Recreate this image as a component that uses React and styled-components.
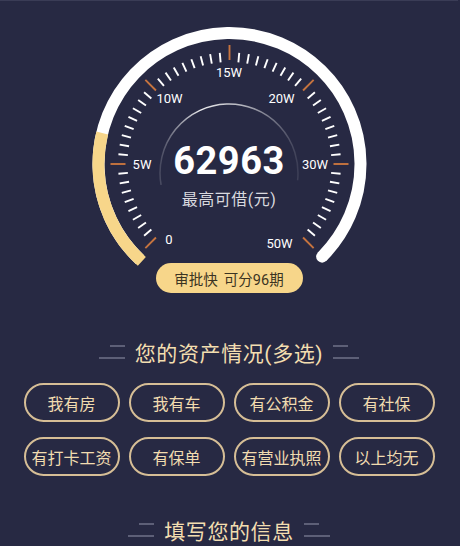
import React from 'react';
import styled, { createGlobalStyle } from 'styled-components';

const GlobalStyle = createGlobalStyle`
  html, body {
    margin: 0;
    padding: 0;
    background: #272943;
  }
  body {
    font-family: Roboto, "Noto Sans CJK SC", sans-serif;
  }
`;

const Page = styled.div`
  width: 458px;
  min-height: 546px;
  border-top: 1px solid #3a3c56;
  box-sizing: border-box;
  overflow: hidden;
`;

const GaugeWrap = styled.div`
  position: relative;
  height: 262px;
`;

const GaugeSvg = styled.svg`
  display: block;
  overflow: visible;
`;

const CenterText = styled.div`
  position: absolute;
  left: 0;
  right: 0;
  top: 137px;
  text-align: center;
`;

const Amount = styled.div`
  font-family: Roboto, sans-serif;
  font-weight: 700;
  font-size: 38px;
  line-height: 46px;
  color: #ffffff;
  letter-spacing: 0.5px;
`;

const Caption = styled.div`
  margin-top: 5px;
  font-size: 16px;
  line-height: 22px;
  color: #d9d9df;
  letter-spacing: 0.5px;
`;

const Badge = styled.div`
  width: 147px;
  height: 30px;
  margin: 0 auto;
  border-radius: 15px;
  background: #f7d68a;
  color: #3b3422;
  font-size: 14.5px;
  display: flex;
  align-items: center;
  justify-content: center;
  gap: 6px;
`;

const Title = styled.div`
  display: flex;
  align-items: center;
  justify-content: center;
  gap: 10px;
  margin-top: ${p => p.$top}px;
  height: 30px;
  font-size: 21px;
  letter-spacing: 0.6px;
  color: #f3deb0;
`;

const Deco = styled.span`
  display: flex;
  flex-direction: column;
  align-items: ${p => (p.$side === 'left' ? 'flex-end' : 'flex-start')};
  gap: 10px;

  &::before,
  &::after {
    content: '';
    display: block;
    height: 2px;
    background: #5d5f77;
  }
  &::before {
    width: 15px;
  }
  &::after {
    width: 26px;
  }
`;

const ChipGrid = styled.div`
  display: grid;
  grid-template-columns: repeat(4, 96px);
  column-gap: 9px;
  row-gap: 15px;
  justify-content: center;
  margin-top: 16px;
`;

const Chip = styled.div`
  box-sizing: border-box;
  height: 39px;
  border: 2px solid #d6be96;
  border-radius: 20px;
  display: flex;
  align-items: center;
  justify-content: center;
  font-size: 16px;
  color: #f1dcb0;
  white-space: nowrap;
`;

const CX = 229.5;
const CY = 163;

const pt = (deg, r, cx = CX, cy = CY) => {
  const a = (deg * Math.PI) / 180;
  return [cx + r * Math.sin(a), cy - r * Math.cos(a)];
};

const arc = (from, to, r, cx = CX, cy = CY) => {
  const [x1, y1] = pt(from, r, cx, cy);
  const [x2, y2] = pt(to, r, cx, cy);
  const large = to - from > 180 ? 1 : 0;
  return `M ${x1} ${y1} A ${r} ${r} 0 ${large} 1 ${x2} ${y2}`;
};

const labels = [
  { t: '0', x: 169, y: 238 },
  { t: '5W', x: 142, y: 163 },
  { t: '10W', x: 169.5, y: 97.5 },
  { t: '15W', x: 229, y: 71.5 },
  { t: '20W', x: 281.5, y: 97.5 },
  { t: '30W', x: 315, y: 163 },
  { t: '50W', x: 279.5, y: 242.5 },
];

const assets = ['我有房', '我有车', '有公积金', '有社保', '有打卡工资', '有保单', '有营业执照', '以上均无'];

const Gauge = () => {
  const ticks = [];
  for (let i = 0; i <= 54; i++) {
    const deg = -135 + i * 5;
    const major = i % 9 === 0;
    const [x1, y1] = pt(deg, major ? 104 : 102);
    const [x2, y2] = pt(deg, major ? 119 : 111.5);
    ticks.push(
      <line
        key={i}
        x1={x1}
        y1={y1}
        x2={x2}
        y2={y2}
        stroke={major ? '#c7743f' : '#ffffff'}
        strokeWidth="1.9"
      />
    );
  }
  const [ex, ey] = pt(135, 131);

  return (
    <GaugeSvg width="460" height="262" viewBox="0 0 460 262">
      <defs>
        <linearGradient id="inner" x1="0" y1="0" x2="1" y2="0">
          <stop offset="0" stopColor="#ffffff" stopOpacity="0.15" />
          <stop offset="0.3" stopColor="#ffffff" stopOpacity="0.9" />
          <stop offset="0.6" stopColor="#ffffff" stopOpacity="0.65" />
          <stop offset="1" stopColor="#ffffff" stopOpacity="0.1" />
        </linearGradient>
      </defs>
      <path d={arc(-137, 135, 131)} fill="none" stroke="#ffffff" strokeWidth="12" />
      <circle cx={ex} cy={ey} r="6" fill="#ffffff" />
      <path d={arc(-138, -76.3, 131)} fill="none" stroke="#f7d68a" strokeWidth="12" />
      {ticks}
      <path d={arc(-100, 96, 69, 229, 172)} fill="none" stroke="url(#inner)" strokeWidth="1.5" />
      {labels.map(l => (
        <text
          key={l.t}
          x={l.x}
          y={l.y}
          fill="#ffffff"
          fontSize="13"
          fontFamily="Roboto, sans-serif"
          textAnchor="middle"
          dominantBaseline="central"
        >
          {l.t}
        </text>
      ))}
    </GaugeSvg>
  );
};

const App = () => (
  <>
    <GlobalStyle />
    <Page>
      <GaugeWrap>
        <Gauge />
        <CenterText>
          <Amount>62963</Amount>
          <Caption>最高可借(元)</Caption>
        </CenterText>
      </GaugeWrap>
      <Badge>
        <span>审批快</span>
        <span>可分96期</span>
      </Badge>
      <Title $top={44}>
        <Deco $side="left" />
        您的资产情况(多选)
        <Deco $side="right" />
      </Title>
      <ChipGrid>
        {assets.map(a => (
          <Chip key={a}>{a}</Chip>
        ))}
      </ChipGrid>
      <Title $top={39}>
        <Deco $side="left" />
        填写您的信息
        <Deco $side="right" />
      </Title>
    </Page>
  </>
);

export default App;
